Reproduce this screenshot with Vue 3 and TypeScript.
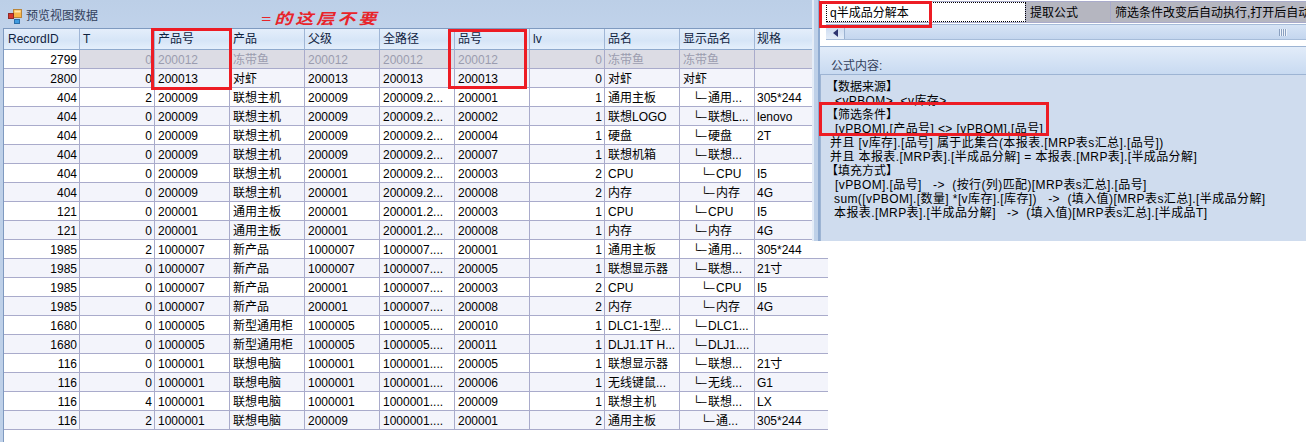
<script setup lang="ts">
type Row = { id: number; t: number; pno: string; prod: string; parent: string; path: string; no: string; lv: number; name: string; show: string; spec: string; tree?: number };

const headers: string[] = ['RecordID', 'T', '产品号', '产品', '父级', '全路径', '品号', 'lv', '品名', '显示品名', '规格'];

function r(id: number, t: number, pno: string, prod: string, parent: string, path: string, no: string, lv: number, name: string, show: string, spec: string): Row {
  return { id, t, pno, prod, parent, path, no, lv, name, show, spec, tree: lv };
}

const rows: Row[] = [
  r(2799, 0, '200012', '冻带鱼', '200012', '200012', '200012', 0, '冻带鱼', '冻带鱼', ''),
  r(2800, 0, '200013', '对虾', '200013', '200013', '200013', 0, '对虾', '对虾', ''),
  r(404, 2, '200009', '联想主机', '200009', '200009.2...', '200001', 1, '通用主板', '通用...', '305*244'),
  r(404, 0, '200009', '联想主机', '200009', '200009.2...', '200002', 1, '联想LOGO', '联想L...', 'lenovo'),
  r(404, 0, '200009', '联想主机', '200009', '200009.2...', '200004', 1, '硬盘', '硬盘', '2T'),
  r(404, 0, '200009', '联想主机', '200009', '200009.2...', '200007', 1, '联想机箱', '联想...', ''),
  r(404, 0, '200009', '联想主机', '200001', '200009.2...', '200003', 2, 'CPU', 'CPU', 'I5'),
  r(404, 0, '200009', '联想主机', '200001', '200009.2...', '200008', 2, '内存', '内存', '4G'),
  r(121, 0, '200001', '通用主板', '200001', '200001.2...', '200003', 1, 'CPU', 'CPU', 'I5'),
  r(121, 0, '200001', '通用主板', '200001', '200001.2...', '200008', 1, '内存', '内存', '4G'),
  r(1985, 2, '1000007', '新产品', '1000007', '1000007....', '200001', 1, '通用主板', '通用...', '305*244'),
  r(1985, 0, '1000007', '新产品', '1000007', '1000007....', '200005', 1, '联想显示器', '联想...', '21寸'),
  r(1985, 0, '1000007', '新产品', '200001', '1000007....', '200003', 2, 'CPU', 'CPU', 'I5'),
  r(1985, 0, '1000007', '新产品', '200001', '1000007....', '200008', 2, '内存', '内存', '4G'),
  r(1680, 0, '1000005', '新型通用柜', '1000005', '1000005....', '200010', 1, 'DLC1-1型...', 'DLC1...', ''),
  r(1680, 0, '1000005', '新型通用柜', '1000005', '1000005....', '200011', 1, 'DLJ1.1T H...', 'DLJ1....', ''),
  r(116, 0, '1000001', '联想电脑', '1000001', '1000001....', '200005', 1, '联想显示器', '联想...', '21寸'),
  r(116, 0, '1000001', '联想电脑', '1000001', '1000001....', '200006', 1, '无线键鼠...', '无线...', 'G1'),
  r(116, 4, '1000001', '联想电脑', '1000001', '1000001....', '200009', 1, '联想主机', '联想...', 'LX'),
  r(116, 2, '1000001', '联想电脑', '200009', '1000001....', '200001', 2, '通用主板', '通...', '305*244'),
];

const formula: { text: string; cls: string }[] = [
  { text: '【数据来源】', cls: 'l0' },
  { text: '<vPBOM>  <v库存>', cls: 'l1' },
  { text: '【筛选条件】', cls: 'l0' },
  { text: '[vPBOM].[产品号] <> [vPBOM].[品号]', cls: 'l1' },
  { text: '并且 [v库存].[品号] 属于此集合(本报表.[MRP表s汇总].[品号])', cls: 'l0b' },
  { text: '并且 本报表.[MRP表].[半成品分解] = 本报表.[MRP表].[半成品分解]', cls: 'l0b' },
  { text: '【填充方式】', cls: 'l0' },
  { text: '[vPBOM].[品号]   ->  (按行(列)匹配)[MRP表s汇总].[品号]', cls: 'l1' },
  { text: 'sum([vPBOM].[数量] *[v库存].[库存])   ->  (填入值)[MRP表s汇总].[半成品分解]', cls: 'l2' },
  { text: '本报表.[MRP表].[半成品分解]   ->  (填入值)[MRP表s汇总].[半成品T]', cls: 'l2' },
];
</script>

<template>
  <div class="page">
    <section class="win">
      <header class="title">
        <svg class="ticon" width="14" height="15" viewBox="0 0 14 15">
          <rect x="5.5" y="0.5" width="8" height="8" fill="#f7b64a" stroke="#b9853a" />
          <rect x="6.5" y="1.5" width="6" height="2" fill="#fde6ae" />
          <rect x="0.5" y="4.5" width="5" height="5" fill="#d8352c" stroke="#8e2a26" />
          <rect x="6.5" y="10.5" width="5" height="4" fill="#3f9be0" stroke="#2c6ea8" />
        </svg>
        <span>预览视图数据</span>
      </header>
      <div class="grid">
        <div class="row head">
          <div v-for="h in headers" :key="h" class="cell">{{ h }}</div>
        </div>
        <div v-for="(row, i) in rows" :key="i" class="row" :class="{ alt: i % 2 === 1, dim: i === 0 }">
          <div class="cell num first">{{ row.id }}</div>
          <div class="cell num">{{ row.t }}</div>
          <div class="cell">{{ row.pno }}</div>
          <div class="cell">{{ row.prod }}</div>
          <div class="cell">{{ row.parent }}</div>
          <div class="cell">{{ row.path }}</div>
          <div class="cell">{{ row.no }}</div>
          <div class="cell num">{{ row.lv }}</div>
          <div class="cell">{{ row.name }}</div>
          <div class="cell" :class="'tree' + row.tree"><span v-if="row.tree" class="branch">└─</span>{{ row.show }}</div>
          <div class="cell">{{ row.spec }}</div>
        </div>
      </div>
    </section>

    <aside class="side">
      <div class="strip"></div>
      <div class="panel">
        <div class="top">
          <div class="frow">
            <div class="fcell current">q半成品分解本</div>
            <div class="fcell w85">提取公式</div>
            <div class="fcell grow">筛选条件改变后自动执行,打开后自动</div>
          </div>
          <div class="scroll">
            <div class="arrow"></div>
            <div class="thumb"><span class="grip"></span></div>
          </div>
        </div>
        <div class="label">公式内容:</div>
        <div class="content">
          <div v-for="(l, i) in formula" :key="i" class="line" :class="l.cls">{{ l.text }}</div>
        </div>
      </div>
    </aside>

    <div class="mark m1"></div>
    <div class="mark m2"></div>
    <div class="mark m3"></div>
    <div class="mark m4"></div>
    <div class="note">=的这层不要</div>
  </div>
</template>

<style>
html, body { margin: 0; background: #fff; }
</style>

<style scoped>
.page {
  position: relative;
  width: 1306px;
  height: 442px;
  overflow: hidden;
  background: #fff;
  font: 12px/14px "Liberation Sans", "Noto Sans CJK SC", sans-serif;
  color: #000;
}
.win { display: flex; flex-direction: column; height: 442px; }
.title {
  height: 28px;
  box-sizing: border-box;
  width: 812px;
  display: flex;
  align-items: center;
  gap: 4px;
  padding: 4px 0 0 8px;
  background: linear-gradient(#bccfe7, #c0d2ea);
  color: #32405c;
}
.ticon { flex: none; }
.grid {
  flex: 1;
  margin-left: 3px;
  border-left: 1px solid #7f9ac0;
  box-shadow: -3px 0 0 #bed0e8;
  border-top: 1px solid #7f9ac0;
  position: relative;
}
.row {
  display: grid;
  grid-template-columns: 76px repeat(9, 75px) 73px;
  width: 824px;
  height: 19px;
  background: #fff;
}
.row.alt { background: #f3f4fb; }
.cell {
  box-sizing: border-box;
  padding: 3px 2px 0 3px;
  border-right: 1px solid #a9abcb;
  border-bottom: 1px solid #a9abcb;
  white-space: pre;
  overflow: hidden;
}
.cell:last-child { border-right: 0; padding-left: 2px; }
.num { text-align: right; }
.row.dim .cell { background: #dcdce4; color: #9b9caf; }
.row.dim .cell.first { background: #fff; color: #000; }
.row.head { height: 21px; background: linear-gradient(#e4eefb, #d6e5f7 55%, #e6f0fc); }
.head .cell {
  padding-top: 3px;
  border-color: #a0b6d6;
  color: #10233f;
  border-bottom-color: #8ea9cd;
}
.head .cell:first-child { padding-left: 4px; }
.tree1 { padding-left: 12px; }
.tree2 { padding-left: 20px; }
.branch { letter-spacing: -2.5px; margin-right: 4px; }

.side {
  position: absolute;
  left: 812px;
  top: 0;
  width: 494px;
  height: 241px;
  display: flex;
  background: #cfdcee;
}
.strip {
  width: 8px;
  flex: none;
  background: linear-gradient(90deg, #e4ecf7 0 2px, #bed0e8 2px 6px, #8eaad0 6px);
}
.panel { flex: 1; min-width: 0; display: flex; flex-direction: column; }
.top { height: 46px; flex: none; background: #fff; box-sizing: border-box; padding: 1px 0 0 6px; overflow: hidden; }
.frow {
  display: flex;
  height: 22px;
  box-sizing: border-box;
  border-top: 1px solid #a9abcb;
  border-bottom: 1px solid #a9abcb;
  white-space: nowrap;
}
.fcell {
  box-sizing: border-box;
  padding: 4px 0 0 4px;
  background: #b5b6c0;
  border-right: 1px solid #a9abcb;
  overflow: hidden;
}
.current { width: 200px; background: #fff; outline: 1px dotted #000; outline-offset: -1px; }
.w85 { width: 85px; }
.grow { flex: 1; border-right: 0; }
.scroll {
  display: flex;
  height: 16px;
  margin-top: 1px;
  background: linear-gradient(#c9d9ee, #e4edf9);
  border-top: 1px solid #a6bcd9;
  border-bottom: 1px solid #a6bcd9;
  box-sizing: border-box;
}
.arrow {
  width: 18px;
  flex: none;
  position: relative;
}
.arrow::before {
  content: "";
  position: absolute;
  left: 7px;
  top: 4px;
  border: 4px solid transparent;
  border-left-width: 0;
  border-right: 5px solid #2e3470;
}
.thumb {
  flex: 1;
  border-left: 1px solid #9cb3d2;
  display: flex;
  align-items: center;
  justify-content: flex-end;
  padding-right: 19px;
  background: linear-gradient(#d7e4f5, #c4d6ee);
}
.grip {
  width: 8px;
  height: 7px;
  background: repeating-linear-gradient(90deg, #8aa0c0 0 1px, #eef3fa 1px 2px);
}
.label {
  height: 29px;
  flex: none;
  box-sizing: border-box;
  padding: 12px 0 0 11px;
  color: #32405c;
  background: linear-gradient(#e2ecf9, #c8daf1);
  border-top: 1px solid #9db4d3;
  border-bottom: 1px solid #9db4d3;
}
.content { flex: 1; padding: 5px 0 0 0; background: #cfdcee; border-left: 1px solid #9db4d3; letter-spacing: 0.4px; }
.line { height: 14px; white-space: pre; }
.l0 { padding-left: 5px; letter-spacing: 0; }
.l0b { padding-left: 9px; }
.l1 { padding-left: 14px; }
.l2 { padding-left: 13px; }

.mark {
  position: absolute;
  box-sizing: border-box;
  border: 3px solid #ed1c24;
}
.m1 { left: 151px; top: 28px; width: 81px; height: 62px; }
.m2 { left: 448px; top: 29px; width: 79px; height: 60px; }
.m3 { left: 819px; top: 1px; width: 113px; height: 27px; }
.m4 { left: 819px; top: 102px; width: 230px; height: 34px; }
.note {
  position: absolute;
  left: 261px;
  top: 10px;
  color: #e8242a;
  font: italic 700 15px/18px "Liberation Serif", "Noto Sans CJK SC", serif;
  letter-spacing: 2.5px;
  transform: scaleX(1.2);
  transform-origin: left center;
  white-space: nowrap;
}
</style>
